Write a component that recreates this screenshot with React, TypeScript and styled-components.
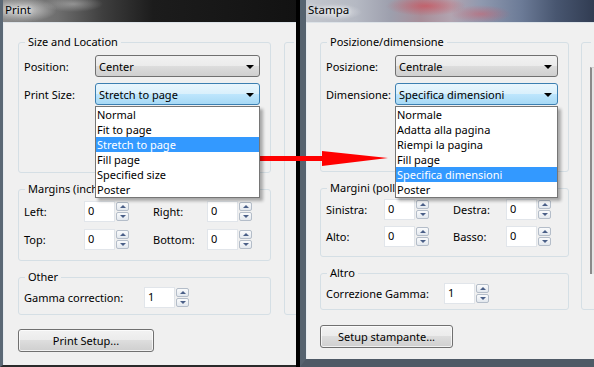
import React from 'react';
import styled, { createGlobalStyle } from 'styled-components';

const GlobalStyle = createGlobalStyle`
  html, body {
    margin: 0;
    padding: 0;
  }
  body {
    width: 594px;
    height: 367px;
    overflow: hidden;
    background: #111;
    font-family: 'Noto Sans', 'Open Sans', sans-serif;
    font-size: 11px;
    color: #000;
  }
`;

interface WindowSpec {
  title: string;
  width?: number;
  frameLeft: number;
  frameBottom: number;
  frameColor: string;
  bottomColor: string;
  titleBg: string;
  padLeft: number;
  mainWidth: number;
  sideGap: number;
  sideLegend: string;
  showPreview: boolean;
  sizeLegend: string;
  positionLabel: string;
  positionValue: string;
  sizeLabel: string;
  sizeValue: string;
  options: string[];
  selected: number;
  labelW: number;
  comboW: number;
  marginsLegend: string;
  marginLabels: [string, string, string, string];
  label1W: number;
  label2W: number;
  otherLegend: string;
  gammaLabel: string;
  gammaLabelW: number;
  buttonLabel: string;
  buttonW: number;
  g1Pb: number;
  g2Pt: number;
  rowGap: number;
  g2Pb: number;
  g3Pb: number;
  buttonGap: number;
}

const leftSpec: WindowSpec = {
  title: 'Print',
  width: 296,
  frameLeft: 3,
  frameBottom: 2,
  frameColor: '#5b6875',
  bottomColor: '#2a2a2a',
  titleBg:
    'radial-gradient(ellipse 34px 12px at 20px 10px, rgba(235,235,235,0.75), rgba(235,235,235,0) 100%), radial-gradient(ellipse 30px 8px at 70px 4px, rgba(200,200,200,0.5), rgba(200,200,200,0) 100%), linear-gradient(90deg, #8c8c8c 0px, #6e6e6e 55px, #3e3e3e 100px, #1c1c1c 150px, #121212 296px)',
  padLeft: 14,
  mainWidth: 253,
  sideGap: 13,
  sideLegend: 'Preview',
  showPreview: false,
  sizeLegend: 'Size and Location',
  positionLabel: 'Position:',
  positionValue: 'Center',
  sizeLabel: 'Print Size:',
  sizeValue: 'Stretch to page',
  options: ['Normal', 'Fit to page', 'Stretch to page', 'Fill page', 'Specified size', 'Poster'],
  selected: 2,
  labelW: 71,
  comboW: 165,
  marginsLegend: 'Margins (inches)',
  marginLabels: ['Left:', 'Right:', 'Top:', 'Bottom:'],
  label1W: 60,
  label2W: 54,
  otherLegend: 'Other',
  gammaLabel: 'Gamma correction:',
  gammaLabelW: 120,
  buttonLabel: 'Print Setup...',
  buttonW: 136,
  g1Pb: 67,
  g2Pt: 4,
  rowGap: 7,
  g2Pb: 10,
  g3Pb: 6,
  buttonGap: 14,
};

const rightSpec: WindowSpec = {
  title: 'Stampa',
  frameLeft: 6,
  frameBottom: 8,
  frameColor: '#56636f',
  bottomColor: '#4e5a66',
  titleBg:
    'radial-gradient(ellipse 40px 10px at 120px 6px, rgba(214,60,70,0.55), rgba(214,60,70,0) 100%), radial-gradient(ellipse 30px 9px at 175px 14px, rgba(220,80,90,0.45), rgba(220,80,90,0) 100%), radial-gradient(ellipse 26px 8px at 30px 12px, rgba(230,232,236,0.8), rgba(230,232,236,0) 100%), linear-gradient(90deg, #c3c7ce 0px, #b5b9c3 50px, #9d9fad 85px, #a88e99 115px, #b2a4b0 145px, #8f99af 175px, #6c7b97 215px, #485670 250px, #313c52 288px)',
  padLeft: 13,
  mainWidth: 249,
  sideGap: 12,
  sideLegend: 'Anteprima',
  showPreview: true,
  sizeLegend: 'Posizione/dimensione',
  positionLabel: 'Posizione:',
  positionValue: 'Centrale',
  sizeLabel: 'Dimensione:',
  sizeValue: 'Specifica dimensioni',
  options: ['Normale', 'Adatta alla pagina', 'Riempi la pagina', 'Fill page', 'Specifica dimensioni', 'Poster'],
  selected: 4,
  labelW: 69,
  comboW: 163,
  marginsLegend: 'Margini (pollici)',
  marginLabels: ['Sinistra:', 'Destra:', 'Alto:', 'Basso:'],
  label1W: 58,
  label2W: 53,
  otherLegend: 'Altro',
  gammaLabel: 'Correzione Gamma:',
  gammaLabelW: 118,
  buttonLabel: 'Setup stampante...',
  buttonW: 133,
  g1Pb: 66,
  g2Pt: 3,
  rowGap: 6,
  g2Pb: 9,
  g3Pb: 5,
  buttonGap: 15,
};

const Screen = styled.div`
  position: relative;
  display: flex;
  width: 594px;
  height: 367px;
  overflow: hidden;
`;

const Separator = styled.div`
  flex: 0 0 4px;
  background: #000;
`;

const WindowShell = styled.div<{ $width?: number; $frame: number; $frameBottom: number; $frameColor: string; $bottomColor: string }>`
  flex: ${p => (p.$width ? `0 0 ${p.$width}px` : '1 1 0')};
  min-width: 0;
  display: flex;
  flex-direction: column;
  box-sizing: border-box;
  height: 367px;
  border-left: ${p => p.$frame}px solid ${p => p.$frameColor};
  border-bottom: ${p => p.$frameBottom}px solid ${p => p.$bottomColor};
  overflow: hidden;
`;

const TitleBar = styled.div<{ $bg: string }>`
  flex: 0 0 22px;
  padding-left: 2px;
  line-height: 20px;
  font-size: 11.5px;
  color: #000;
  background: ${p => p.$bg};
  text-shadow: 0 0 4px rgba(255, 255, 255, 0.9), 0 0 8px rgba(255, 255, 255, 0.6);
  white-space: nowrap;
`;

const Body = styled.div<{ $padLeft: number }>`
  flex: 1 1 auto;
  background: #f0f0f0;
  border-top: 1px solid #dde3e8;
  border-left: 1px solid #e6ebef;
  padding: 11px 0 0 ${p => p.$padLeft}px;
  overflow: hidden;
`;

const Columns = styled.div<{ $main: number; $gap: number }>`
  display: grid;
  grid-template-columns: ${p => p.$main}px 260px;
  column-gap: ${p => p.$gap}px;
  align-items: stretch;
`;

const MainCol = styled.div`
  display: flex;
  flex-direction: column;
  gap: 8px;
`;

const Group = styled.fieldset<{ $pt: number; $pb: number }>`
  margin: 0;
  min-width: 0;
  padding: ${p => p.$pt}px 5px ${p => p.$pb}px 5px;
  border: 1px solid #d5dfe5;
  border-radius: 3px;
`;

const Legend = styled.legend`
  margin-left: 1px;
  padding: 0 3px;
  line-height: 16px;
  white-space: nowrap;
`;

const FieldGrid = styled.div<{ $cols: string; $gap: number }>`
  display: grid;
  grid-template-columns: ${p => p.$cols};
  row-gap: ${p => p.$gap}px;
  align-items: center;
`;

const Label = styled.span`
  white-space: nowrap;
`;

const Combo = styled.div<{ $open?: boolean }>`
  position: relative;
  height: 22px;
  box-sizing: border-box;
  display: flex;
  align-items: center;
  justify-content: space-between;
  padding: 0 5px 0 3px;
  border: 1px solid ${p => (p.$open ? '#3c7fb1' : '#707070')};
  border-radius: 3px;
  background: ${p =>
    p.$open
      ? 'linear-gradient(#eaf6fd 0%, #d9f0fc 50%, #bee6fd 50%, #a7d9f5 100%)'
      : 'linear-gradient(#f2f2f2 0%, #ebebeb 50%, #dddddd 50%, #cfcfcf 100%)'};
  white-space: nowrap;
`;

const ComboArrow = styled.span`
  width: 0;
  height: 0;
  border-left: 4px solid transparent;
  border-right: 4px solid transparent;
  border-top: 4px solid #000;
  margin-top: 1px;
`;

const DropList = styled.ul`
  position: absolute;
  left: -1px;
  right: -1px;
  top: 22px;
  margin: 0;
  padding: 0;
  list-style: none;
  background: #fff;
  border: 1px solid #767676;
  box-shadow: 3px 3px 3px rgba(0, 0, 0, 0.3);
  z-index: 5;
`;

const DropItem = styled.li<{ $active?: boolean }>`
  height: 15px;
  line-height: 15px;
  padding-left: 1px;
  white-space: nowrap;
  background: ${p => (p.$active ? '#3399ff' : 'transparent')};
  color: ${p => (p.$active ? '#fff' : '#000')};
`;

const NumBox = styled.div`
  height: 21px;
  box-sizing: border-box;
  border: 1px solid #e1e5ea;
  background: #fff;
  padding-left: 3px;
  line-height: 18px;
`;

const Spin = styled.div`
  justify-self: end;
  align-self: start;
  display: flex;
  flex-direction: column;
  gap: 1px;
  width: 13px;
  margin-top: 1px;
`;

const SpinButton = styled.div<{ $down?: boolean }>`
  height: 9px;
  box-sizing: border-box;
  border: 1px solid #b4bdc9;
  border-radius: 2px;
  background: linear-gradient(#fafbfc, #e3e8ee);
  display: flex;
  align-items: center;
  justify-content: center;

  &::before {
    content: '';
    width: 0;
    height: 0;
    border-left: 3px solid transparent;
    border-right: 3px solid transparent;
    ${p => (p.$down ? 'border-top: 3px solid #4a5f87;' : 'border-bottom: 3px solid #4a5f87;')}
  }
`;

const PushButton = styled.button<{ $w: number; $gap: number }>`
  display: block;
  width: ${p => p.$w}px;
  height: 23px;
  margin-top: ${p => p.$gap}px;
  padding: 0;
  font: inherit;
  color: #000;
  border: 1px solid #707070;
  border-radius: 3px;
  background: linear-gradient(#f2f2f2 0%, #ebebeb 50%, #dddddd 50%, #cfcfcf 100%);
  box-shadow: inset 0 0 0 1px rgba(255, 255, 255, 0.7);
`;

const SideGroup = styled.fieldset`
  margin: 0;
  min-width: 0;
  padding: 0 0 0 8px;
  border: 1px solid #d5dfe5;
  border-radius: 3px;
`;

const PreviewPane = styled.div`
  margin-top: 17px;
  height: 206px;
  border-left: 2px solid #8a8a8a;
  border-top: 1px solid #cfcfcf;
  background: #e4e4e4;
`;

const ArrowOverlay = styled.svg`
  position: absolute;
  left: 0;
  top: 0;
  pointer-events: none;
`;

const SpinControl: React.FC<{ value: string }> = ({ value }) => (
  <>
    <NumBox>{value}</NumBox>
    <Spin>
      <SpinButton />
      <SpinButton $down />
    </Spin>
  </>
);

const PrintWindow: React.FC<{ spec: WindowSpec }> = ({ spec: s }) => {
  const marginCols = `${s.label1W}px 31px 14px 24px ${s.label2W}px 31px 14px`;
  return (
    <WindowShell
      $width={s.width}
      $frame={s.frameLeft}
      $frameBottom={s.frameBottom}
      $frameColor={s.frameColor}
      $bottomColor={s.bottomColor}
    >
      <TitleBar $bg={s.titleBg}>{s.title}</TitleBar>
      <Body $padLeft={s.padLeft}>
        <Columns $main={s.mainWidth} $gap={s.sideGap}>
          <MainCol>
            <Group $pt={5} $pb={s.g1Pb}>
              <Legend>{s.sizeLegend}</Legend>
              <FieldGrid $cols={`${s.labelW}px ${s.comboW}px`} $gap={6}>
                <Label>{s.positionLabel}</Label>
                <Combo>
                  {s.positionValue}
                  <ComboArrow />
                </Combo>
                <Label>{s.sizeLabel}</Label>
                <Combo $open>
                  {s.sizeValue}
                  <ComboArrow />
                  <DropList>
                    {s.options.map((o, i) => (
                      <DropItem key={o} $active={i === s.selected}>
                        {o}
                      </DropItem>
                    ))}
                  </DropList>
                </Combo>
              </FieldGrid>
            </Group>

            <Group $pt={s.g2Pt} $pb={s.g2Pb}>
              <Legend>{s.marginsLegend}</Legend>
              <FieldGrid $cols={marginCols} $gap={s.rowGap}>
                <Label>{s.marginLabels[0]}</Label>
                <SpinControl value="0" />
                <span />
                <Label>{s.marginLabels[1]}</Label>
                <SpinControl value="0" />
                <Label>{s.marginLabels[2]}</Label>
                <SpinControl value="0" />
                <span />
                <Label>{s.marginLabels[3]}</Label>
                <SpinControl value="0" />
              </FieldGrid>
            </Group>

            <Group $pt={2} $pb={s.g3Pb}>
              <Legend>{s.otherLegend}</Legend>
              <FieldGrid $cols={`${s.gammaLabelW}px 31px 14px`} $gap={0}>
                <Label>{s.gammaLabel}</Label>
                <SpinControl value="1" />
              </FieldGrid>
            </Group>
          </MainCol>

          <SideGroup>
            <Legend>{s.sideLegend}</Legend>
            {s.showPreview && <PreviewPane />}
          </SideGroup>
        </Columns>

        <PushButton $w={s.buttonW} $gap={s.buttonGap}>
          {s.buttonLabel}
        </PushButton>
      </Body>
    </WindowShell>
  );
};

export default function App() {
  return (
    <>
      <GlobalStyle />
      <Screen>
        <PrintWindow spec={leftSpec} />
        <Separator />
        <PrintWindow spec={rightSpec} />
        <ArrowOverlay width={594} height={367} viewBox="0 0 594 367">
          <rect x={247} y={156} width={76} height={5} fill="#ff0000" />
          <polygon points="322,151 388,158 322,166" fill="#ff0000" />
        </ArrowOverlay>
      </Screen>
    </>
  );
}
